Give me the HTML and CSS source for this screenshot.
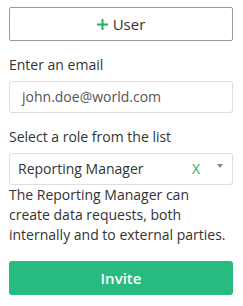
FILE: index.html
```html
<!DOCTYPE html>
<html lang="en">
<head>
    <meta charset="UTF-8">
    <title>Invite user</title>
    <link rel="stylesheet" href="styles.css">
</head>
<body>
    <div class="panel">
        <button class="add-user">
            <svg class="plus" width="11" height="11" viewBox="0 0 11 11"><path d="M5.5 0v11M0 5.5h11" stroke="#27ae60" stroke-width="2"/></svg>
            User
        </button>

        <div class="field">
            <label>Enter an email</label>
            <div class="text-input">john.doe@world.com</div>
        </div>

        <div class="field">
            <label>Select a role from the list</label>
            <div class="select">
                <span class="select-value">Reporting Manager</span>
                <span class="select-clear">X</span>
                <span class="select-arrow"></span>
            </div>
            <p class="role-info">The Reporting Manager can create data requests, both internally and to external parties.</p>
        </div>

        <button class="invite">Invite</button>
    </div>
</body>
</html>
```

FILE: styles.css
```css
body {
    margin: 0;
    font-family: 'Open Sans', sans-serif;
    font-size: 14px;
    line-height: 20px;
    color: #333;
    background: #fff;
}

.panel {
    width: 224px;
    padding: 7px 9px;
    display: flex;
    flex-direction: column;
}

button {
    font-family: inherit;
    cursor: pointer;
}

/* --- Add user --- */
.add-user {
    height: 34px;
    background: #fff;
    border: 1px solid #999;
    border-radius: 2px;
    font-size: 15px;
    color: #333;
    display: flex;
    align-items: center;
    justify-content: center;
}

.add-user .plus {
    margin-right: 5px;
}

/* --- Fields --- */
.field {
    margin-top: 14px;
    display: flex;
    flex-direction: column;
}

.field label {
    margin-bottom: 6px;
}

.text-input {
    height: 30px;
    border: 1px solid #ddd;
    border-radius: 3px;
    padding: 0 12px;
    display: flex;
    align-items: center;
    color: #555;
}

.select {
    height: 30px;
    border: 1px solid #ddd;
    border-radius: 3px;
    padding: 0 8px;
    display: flex;
    align-items: center;
}

.select-value {
    flex: 1;
    color: #333;
}

.select-clear {
    color: #27ae60;
    font-size: 14px;
}

.select-arrow {
    width: 0;
    height: 0;
    border-left: 3px solid transparent;
    border-right: 3px solid transparent;
    border-top: 4px solid #888;
    margin-left: 17px;
    margin-right: 1px;
    margin-top: -6px;
}

.role-info {
    margin: 0;
}

/* --- Invite --- */
.invite {
    margin-top: 16px;
    height: 34px;
    background: #28bb7f;
    border: none;
    border-radius: 3px;
    color: #fff;
    font-size: 15px;
    font-weight: 600;
}
```
